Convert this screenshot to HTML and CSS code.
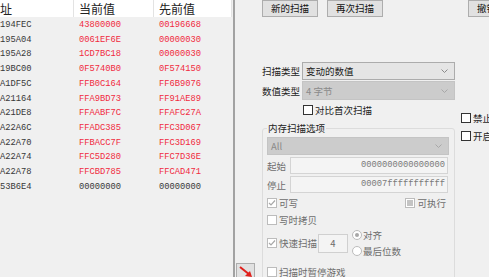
FILE: index.html
```html
<!DOCTYPE html>
<html lang="zh-CN">
<head>
    <meta charset="UTF-8">
    <title>扫描</title>
    <link rel="stylesheet" href="styles.css">
</head>
<body>
    <div class="results">
        <div class="results-head">
            <span class="col-addr">址</span>
            <span>当前值</span>
            <span>先前值</span>
        </div>
        <div class="results-body">
            <span>194FEC</span><span class="changed">43800000</span><span class="changed">00196668</span>
            <span>195A04</span><span class="changed">0061EF6E</span><span class="changed">00000030</span>
            <span>195A28</span><span class="changed">1CD7BC18</span><span class="changed">00000030</span>
            <span>19BC00</span><span class="changed">0F5740B0</span><span class="changed">0F574150</span>
            <span>A1DF5C</span><span class="changed">FFB0C164</span><span class="changed">FF6B9076</span>
            <span>A21164</span><span class="changed">FFA9BD73</span><span class="changed">FF91AE89</span>
            <span>A21DE8</span><span class="changed">FFAABF7C</span><span class="changed">FFAFC27A</span>
            <span>A22A6C</span><span class="changed">FFADC385</span><span class="changed">FFC3D067</span>
            <span>A22A70</span><span class="changed">FFBACC7F</span><span class="changed">FFC3D169</span>
            <span>A22A74</span><span class="changed">FFC5D280</span><span class="changed">FFC7D36E</span>
            <span>A22A78</span><span class="changed">FFCBD785</span><span class="changed">FFCAD471</span>
            <span>53B6E4</span><span>00000000</span><span>00000000</span>
        </div>
    </div>
    <div class="splitter"></div>

    <div class="panel">
        <div class="strip">
            <div class="arrow-btn">
                <svg width="17" height="14" viewBox="0 0 17 14">
                    <path d="M2 2 L12 10" stroke="#e0201c" stroke-width="2" fill="none"/>
                    <path d="M14 12 L7 11 L12 6 Z" fill="#e0201c"/>
                </svg>
            </div>
        </div>

        <div class="main">
            <div class="toolbar">
                <button class="btn">新的扫描</button>
                <button class="btn">再次扫描</button>
                <button class="btn btn-undo">撤销扫描</button>
            </div>

            <div class="columns">
                <div class="col-left">
                    <div class="field-row">
                        <span class="field-label">扫描类型</span>
                        <div class="combo">
                            <span>变动的数值</span>
                            <svg width="7" height="4" viewBox="0 0 7 4"><polyline points="0.5,0.5 3.5,3.5 6.5,0.5" fill="none" stroke="#8a8a8a"/></svg>
                        </div>
                    </div>
                    <div class="field-row value-row">
                        <span class="field-label">数值类型</span>
                        <div class="combo disabled">
                            <span>4 字节</span>
                            <svg width="7" height="4" viewBox="0 0 7 4"><polyline points="0.5,0.5 3.5,3.5 6.5,0.5" fill="none" stroke="#a8a8a8"/></svg>
                        </div>
                    </div>
                    <label class="check compare"><span class="box"></span>对比首次扫描</label>

                    <fieldset class="mem">
                        <legend>内存扫描选项</legend>
                        <div class="combo disabled all">
                            <span>All</span>
                            <svg width="7" height="4" viewBox="0 0 7 4"><polyline points="0.5,0.5 3.5,3.5 6.5,0.5" fill="none" stroke="#a8a8a8"/></svg>
                        </div>
                        <div class="addr-row">
                            <span class="addr-label">起始</span>
                            <div class="addr-input">0000000000000000</div>
                        </div>
                        <div class="addr-row">
                            <span class="addr-label">停止</span>
                            <div class="addr-input">00007fffffffffff</div>
                        </div>
                        <div class="opt-row">
                            <label class="check off"><span class="box checked"><svg width="8" height="8" viewBox="0 0 8 8"><polyline points="1,4 3,6 7,1.5" fill="none" stroke="#a8a8a8" stroke-width="1.2"/></svg></span>可写</label>
                            <label class="check off"><span class="box partial"><span class="fill"></span></span>可执行</label>
                        </div>
                        <div class="opt-row cow">
                            <label class="check off"><span class="box"></span>写时拷贝</label>
                        </div>
                        <div class="fast-row">
                            <label class="check off fast"><span class="box checked"><svg width="8" height="8" viewBox="0 0 8 8"><polyline points="1,4 3,6 7,1.5" fill="none" stroke="#a8a8a8" stroke-width="1.2"/></svg></span>快速扫描</label>
                            <div class="num-input">4</div>
                            <div class="radios">
                                <label class="radio"><span class="dot on"></span>对齐</label>
                                <label class="radio"><span class="dot"></span>最后位数</label>
                            </div>
                        </div>
                        <div class="opt-row pause">
                            <label class="check off"><span class="box"></span>扫描时暂停游戏</label>
                        </div>
                    </fieldset>
                </div>

                <div class="col-side">
                    <label class="check"><span class="box"></span>禁止随机</label>
                    <label class="check"><span class="box"></span>开启变速精灵</label>
                </div>
            </div>
        </div>
    </div>
</body>
</html>
```

FILE: styles.css
```css
/* --- Window --- */
body {
    margin: 0;
    width: 489px;
    height: 277px;
    overflow: hidden;
    display: flex;
    background-color: #f0f0f0;
    color: #1e1e1e;
    font-family: "Noto Sans CJK SC", "Noto Sans", sans-serif;
    font-size: 9.5px;
}
* { box-sizing: border-box; }

/* --- Result list --- */
.results {
    width: 232px;
    flex: none;
}
.results-head {
    display: grid;
    grid-template-columns: 74px 80px 78px;
    height: 17px;
    background-color: #fff;
    font-size: 12px;
    line-height: 17px;
    color: #222;
}
.results-head span {
    padding-left: 5px;
    border-right: 1px solid #e3e3e3;
}
.results-head .col-addr { padding-left: 0; }
.results-body {
    display: grid;
    grid-template-columns: 74px 80px 78px;
    padding-top: 1px;
    font-family: "Liberation Mono", monospace;
    font-size: 8.75px;
    line-height: 14.7px;
    color: #383838;
}
.results-body span:not(:nth-child(3n+1)) { padding-left: 5px; }
.results-body .changed { color: #f02a3e; }

.splitter {
    width: 2px;
    margin-left: 1px;
    flex: none;
    background-color: #a2a2a2;
}

/* --- Scan panel --- */
.panel {
    display: flex;
    flex: none;
    width: 254px;
}
.strip {
    width: 27px;
    flex: none;
    padding-top: 263px;
}
.arrow-btn {
    width: 19px;
    height: 20px;
    margin-left: 1px;
    border: 1px solid #adadad;
    background-color: #e1e1e1;
    padding: 1px 0 0 1px;
}
.main {
    width: 300px;
    flex: none;
}

.toolbar {
    display: flex;
    height: 17px;
}
.btn {
    width: 56px;
    height: 17px;
    flex: none;
    padding: 0;
    border: 1px solid #adadad;
    background-color: #e1e1e1;
    font: inherit;
    line-height: 15px;
    color: #111;
}
.btn + .btn { margin-left: 9px; }
.btn.btn-undo { margin-left: 85px; }

.columns {
    display: flex;
    margin-top: 45px;
}
.col-left {
    width: 193px;
    flex: none;
}
.col-side {
    margin-left: 6px;
    padding-top: 51px;
    display: flex;
    flex-direction: column;
    gap: 8px;
    white-space: nowrap;
}

.field-row {
    display: flex;
    align-items: center;
    height: 18px;
}
.field-row.value-row {
    height: 19px;
    margin-top: 1px;
}
.field-label {
    width: 40px;
    flex: none;
    color: #222;
}
.combo {
    width: 153px;
    height: 100%;
    display: flex;
    align-items: center;
    justify-content: space-between;
    padding: 0 6px 0 3px;
    border: 1px solid #acacac;
    background-color: #e5e5e5;
    color: #1a1a1a;
}
.combo.disabled {
    border-color: #c4c4c4;
    background-color: #cccccc;
    color: #8a8a8a;
}

/* --- Checkboxes & radios --- */
.check {
    display: flex;
    align-items: center;
    gap: 2px;
    height: 10px;
    line-height: 10px;
    white-space: nowrap;
}
.box {
    width: 10px;
    height: 10px;
    flex: none;
    display: flex;
    align-items: center;
    justify-content: center;
    border: 1px solid #333;
    background-color: #fff;
}
.check.off { color: #6d6d6d; }
.check.off .box { border-color: #bcbcbc; }
.box .fill {
    width: 6px;
    height: 6px;
    background-color: #c4c4c4;
}
.compare {
    margin: 5px 0 0 41px;
}

/* --- Memory options group --- */
.mem {
    margin: 7px 0 0;
    padding: 3px 6px 30px 4px;
    min-width: 0;
    border: 1px solid #dcdcdc;
    border-radius: 3px;
}
.mem legend {
    padding: 0 1px;
    line-height: 12px;
    color: #222;
}
.combo.all {
    width: 182px;
    height: 18px;
    padding-left: 3px;
}
.addr-row {
    display: flex;
    align-items: center;
    height: 17px;
    margin-top: 2px;
}
.addr-label {
    width: 23px;
    flex: none;
    color: #6d6d6d;
}
.addr-input {
    width: 159px;
    height: 17px;
    padding-right: 2px;
    border: 1px solid #d4d4d4;
    background-color: #f4f4f4;
    text-align: right;
    font-family: "Liberation Mono", monospace;
    font-size: 8.75px;
    line-height: 15px;
    color: #7a7a7a;
}
.opt-row {
    display: flex;
    justify-content: space-between;
    margin-top: 5px;
    padding-right: 2px;
}
.opt-row.cow { margin-top: 7px; }
.opt-row.pause { margin-top: 11px; }

.fast-row {
    display: flex;
    align-items: center;
    margin-top: 5px;
    height: 26px;
}
.check.fast { width: 51px; flex: none; }
.num-input {
    width: 30px;
    height: 19px;
    border: 1px solid #d0d0d0;
    background-color: #f4f4f4;
    text-align: center;
    line-height: 17px;
    color: #6d6d6d;
}
.radios {
    display: flex;
    flex-direction: column;
    gap: 6px;
    margin-left: 4px;
}
.radio {
    display: flex;
    align-items: center;
    gap: 1px;
    height: 10px;
    line-height: 10px;
    color: #6d6d6d;
}
.dot {
    width: 10px;
    height: 10px;
    display: flex;
    align-items: center;
    justify-content: center;
    border: 1px solid #bcbcbc;
    border-radius: 50%;
    background-color: #fff;
}
.dot.on::after {
    content: "";
    width: 4px;
    height: 4px;
    border-radius: 50%;
    background-color: #a8a8a8;
}
```
